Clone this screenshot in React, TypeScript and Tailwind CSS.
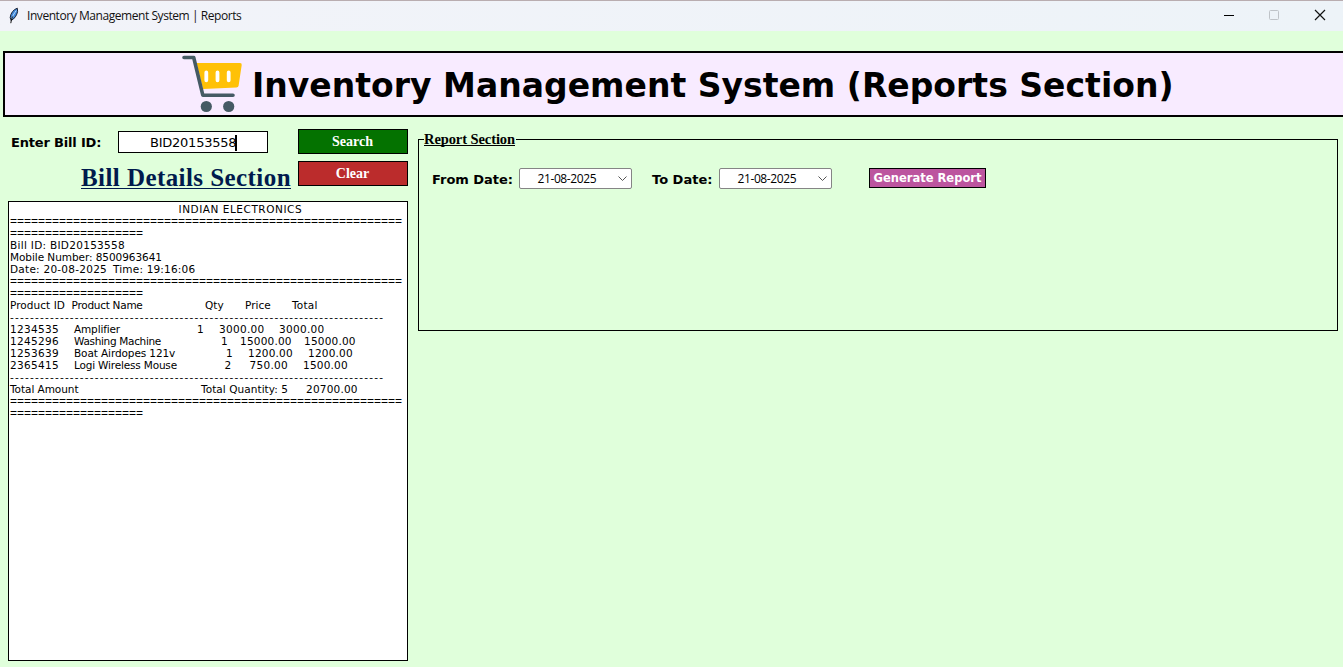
import type { ReactNode } from "react";

function FeatherIcon() {
  return (
    <svg className="h-[18px] w-3 shrink-0" viewBox="0 0 12 18">
      <path d="M9.300 1.200C5.500 2.500 2.600 6 2.200 10.500L3 13.500C6.500 12 9 8 9.600 4.500Z" fill="#3f86d8" stroke="#1c2230" strokeWidth="1" />
      <path d="M8.300 3.500C6 6.500 4.200 10 3.200 12.500" fill="none" stroke="#b9dcf8" strokeWidth="1" />
      <path d="M4.500 9.500C3.500 12 3 14 2.800 16.200" fill="none" stroke="#111" strokeWidth="1" />
    </svg>
  );
}

function CartIcon() {
  return (
    <svg className="h-[60px] w-[62px] shrink-0" viewBox="0 0 62 60">
      <path d="M14.500 9H58Q60 9 59.700 11L56.600 31.800Q56.300 33.500 54.300 33.600L21 35.100Z" fill="#ffc107" />
      <path d="M24.300 18.500V26.300M35.500 18.500V26.300M46.700 18.500V26.300" stroke="#fff" strokeWidth="3.800" strokeLinecap="round" />
      <path d="M2 3.500H11.700L20.800 41.200H51" fill="none" stroke="#455a64" strokeWidth="3.600" strokeLinecap="round" strokeLinejoin="round" />
      <circle cx="24.300" cy="52.500" r="5.600" fill="#455a64" />
      <circle cx="46.700" cy="52.500" r="5.600" fill="#455a64" />
    </svg>
  );
}

function TitleBar() {
  return (
    <header className="flex h-[31px] items-center border-t border-[#b9adb0] bg-linear-to-r from-[#f2f3f9] to-[#edf3f8] pl-2">
      <FeatherIcon />
      <span className="ml-[7px] font-['Open_Sans',sans-serif] text-[12px] tracking-[-0.44px] whitespace-nowrap text-[#111]">
        Inventory Management System | Reports
      </span>
      <svg className="ml-auto h-[30px] w-[120px]" viewBox="0 0 120 30" fill="none">
        <path d="M1 14.500H11" stroke="#000" />
        <rect x="46.500" y="9.500" width="9" height="9" rx="1" stroke="#bfc3c8" />
        <path d="M92 9L102 19M102 9L92 19" stroke="#111" strokeWidth="1.200" />
      </svg>
    </header>
  );
}

type Cell = [width: string, tracking: string, text: string];

function Line({ cells }: { cells: Cell[] }) {
  return (
    <div className="flex h-3">
      {cells.map(([width, tracking, text], i) => (
        <span key={i} className={`shrink-0 whitespace-pre ${width} ${tracking}`}>
          {text}
        </span>
      ))}
    </div>
  );
}

function DoubleRule() {
  return (
    <div className="h-6 font-['Liberation_Sans',sans-serif] text-[12px] leading-3 tracking-[-0.008px]">
      <div>{"=".repeat(56)}</div>
      <div>{"=".repeat(19)}</div>
    </div>
  );
}

function DashRule() {
  return <div className="h-3 tracking-[1.2px] whitespace-nowrap">{"-".repeat(75)}</div>;
}

const num = "tracking-[0.12px]";
const id = "tracking-[0.32px]";

const header: Cell[] = [
  ["w-[61.500px]", "tracking-[0.06px]", "Product ID"],
  ["w-[133.500px]", "tracking-[-0.26px]", "Product Name"],
  ["w-[40px]", "tracking-[0px]", "Qty"],
  ["w-[47px]", "tracking-[0px]", "Price"],
  ["w-[50px]", "tracking-[0.2px]", "Total"],
];

const items: Cell[][] = [
  [
    ["w-[64px]", id, "1234535"],
    ["w-[123px]", "tracking-[-0.15px]", "Amplifier"],
    ["w-[22px]", num, "1"],
    ["w-[60px]", "tracking-[0.3px]", "3000.00"],
    ["w-[60px]", "tracking-[0.3px]", "3000.00"],
  ],
  [
    ["w-[64px]", id, "1245296"],
    ["w-[147px]", "tracking-[-0.32px]", "Washing Machine"],
    ["w-[19px]", num, "1"],
    ["w-[64px]", "tracking-[0.2px]", "15000.00"],
    ["w-[60px]", "tracking-[0.2px]", "15000.00"],
  ],
  [
    ["w-[64px]", id, "1253639"],
    ["w-[152px]", "tracking-[-0.1px]", "Boat Airdopes 121v"],
    ["w-[22px]", num, "1"],
    ["w-[60px]", "tracking-[0.2px]", "1200.00"],
    ["w-[60px]", "tracking-[0.2px]", "1200.00"],
  ],
  [
    ["w-[64px]", id, "2365415"],
    ["w-[150.500px]", "tracking-[-0.18px]", "Logi Wireless Mouse"],
    ["w-[25px]", num, "2"],
    ["w-[53.500px]", "tracking-[0.3px]", "750.00"],
    ["w-[60px]", "tracking-[0.2px]", "1500.00"],
  ],
];

function BillText() {
  return (
    <div className="mt-[15px] h-[460px] w-[400px] overflow-hidden border border-black bg-white pt-px pl-px text-[10.5px] leading-3">
      <Line
        cells={[
          ["w-[168.500px]", "", ""],
          ["w-[140px]", "tracking-[0.54px]", "INDIAN ELECTRONICS"],
        ]}
      />
      <DoubleRule />
      <Line cells={[["w-[200px]", "tracking-[0.29px]", "Bill ID: BID20153558"]]} />
      <Line cells={[["w-[200px]", "tracking-[-0.06px]", "Mobile Number: 8500963641"]]} />
      <Line
        cells={[
          ["w-[103px]", "tracking-[0.25px]", "Date: 20-08-2025"],
          ["w-[100px]", "tracking-[0.18px]", "Time: 19:16:06"],
        ]}
      />
      <DoubleRule />
      <Line cells={header} />
      <DashRule />
      {items.map((cells, i) => (
        <Line key={i} cells={cells} />
      ))}
      <DashRule />
      <Line
        cells={[
          ["w-[191px]", "tracking-[-0.05px]", "Total Amount"],
          ["w-[105px]", "tracking-[0.06px]", "Total Quantity: 5"],
          ["w-[60px]", "tracking-[0.2px]", "20700.00"],
        ]}
      />
      <DoubleRule />
    </div>
  );
}

function SideButton({ className, children }: { className: string; children: ReactNode }) {
  return (
    <button
      className={`h-[25px] w-[110px] border border-black pt-px pr-px font-['Liberation_Serif',serif] text-[14px] leading-none font-bold text-white ${className}`}
    >
      {children}
    </button>
  );
}

function BillPanel() {
  return (
    <section className="w-[400px]">
      <div className="flex h-[57px] justify-between">
        <div className="flex w-[283px] flex-col pt-[2px]">
          <div className="flex h-[22px] items-center">
            <label className="w-[110px] pl-[3px] text-[13px] leading-none font-bold tracking-[-0.18px]">Enter Bill ID:</label>
            <div className="flex h-[22px] w-[150px] items-center border border-black bg-white pt-px pl-[31px] text-[13px] tracking-[-0.24px]">
              BID20153558
              <span className="-ml-px h-4 w-[2px] bg-black" />
            </div>
          </div>
          <h2 className="mt-[11px] self-end border-b border-[#001a4d] pt-1 font-['Liberation_Serif',serif] text-[25px] leading-[20px] font-bold tracking-[0.43px] whitespace-nowrap text-[#001a4d]">
            Bill Details Section
          </h2>
        </div>
        <div className="flex flex-col gap-[7px]">
          <SideButton className="bg-[#047200]">Search</SideButton>
          <SideButton className="bg-[#bb2c2c]">Clear</SideButton>
        </div>
      </div>
      <BillText />
    </section>
  );
}

function DateField() {
  return (
    <div className="flex h-[21px] w-[113px] items-center rounded-[2px] border border-[#858585] bg-white pr-1 pl-[17.500px] font-['Open_Sans',sans-serif] text-[12px] tracking-[-0.4px]">
      21-08-2025
      <svg className="ml-auto h-[5px] w-[9px]" viewBox="0 0 9 5" fill="none">
        <path d="M0.500 0.500L4.500 4.500L8.500 0.500" stroke="#555" />
      </svg>
    </div>
  );
}

function ReportPanel() {
  return (
    <fieldset className="mt-[3px] ml-[10px] h-[199px] w-[920px] border border-black pl-[13px]">
      <legend className="-ml-[8px] pr-px">
        <span className="block border-b border-black pt-px font-['Liberation_Serif',serif] text-[14.5px] leading-[12px] font-bold tracking-[-0.09px]">
          Report Section
        </span>
      </legend>
      <div className="mt-[22px] flex h-[21px] items-start text-[13px] font-bold">
        <span className="w-[87px] pt-[2px] tracking-[-0.03px]">From Date:</span>
        <div className="font-normal">
          <DateField />
        </div>
        <span className="ml-5 w-[67px] pt-[2px]">To Date:</span>
        <div className="font-normal">
          <DateField />
        </div>
        <button className="ml-[37px] h-5 w-[117px] border border-black bg-[#bc559f] pt-[2px] text-[11.5px] leading-none font-bold whitespace-nowrap text-white">
          Generate Report
        </button>
      </div>
    </fieldset>
  );
}

export default function App() {
  return (
    <div className="h-[667px] w-[1343px] overflow-hidden bg-[#e0ffdb] font-['DejaVu_Sans',sans-serif] text-black">
      <TitleBar />
      <div className="mt-5 ml-[3px] flex h-[66px] items-center border-2 border-r-0 border-black bg-[#f8ebff] pl-[177px]">
        <CartIcon />
        <h1 className="ml-[8px] pt-[2px] text-[33px] leading-none font-bold tracking-[0.02px] whitespace-nowrap">
          Inventory Management System (Reports Section)
        </h1>
      </div>
      <main className="mt-3 flex items-start pl-2">
        <BillPanel />
        <ReportPanel />
      </main>
    </div>
  );
}
